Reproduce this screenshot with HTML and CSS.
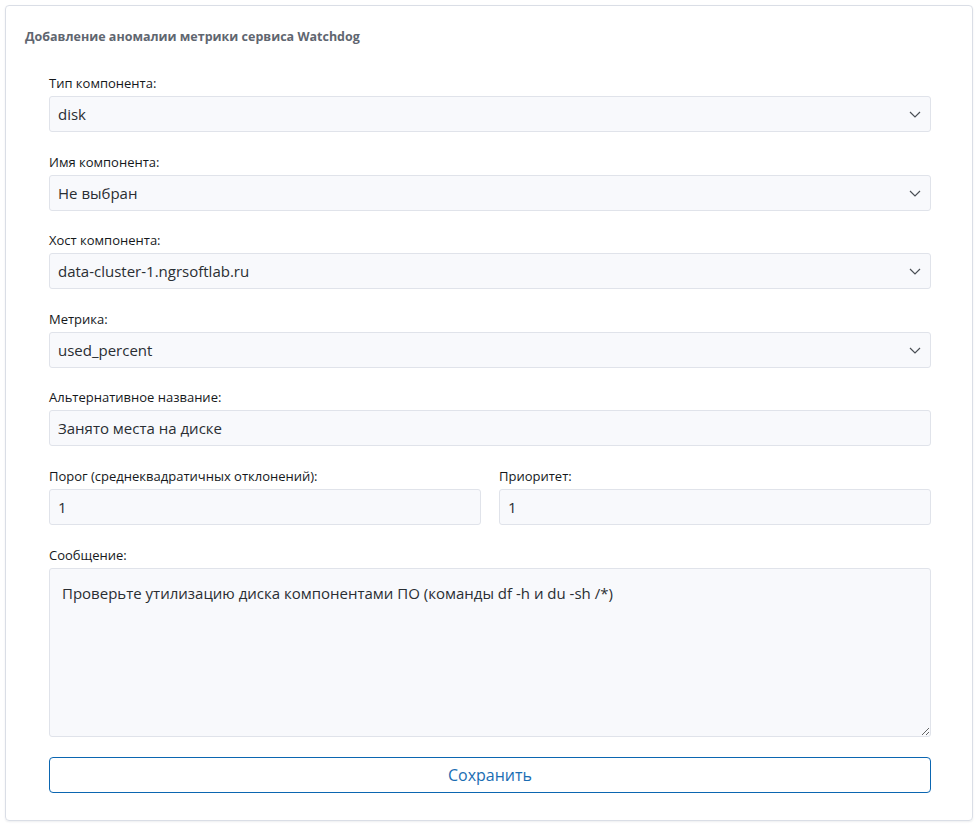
FILE: index.html
```html
<!DOCTYPE html>
<html lang="ru">
<head>
    <meta charset="UTF-8">
    <meta name="viewport" content="width=device-width, initial-scale=1.0">
    <title>Добавление аномалии</title>
    <link rel="stylesheet" href="styles.css">
</head>
<body>
    <div class="card">
        <div class="card-title">Добавление аномалии метрики сервиса Watchdog</div>

        <form class="anomaly-form" onsubmit="return false">
            <div class="field">
                <label for="component-type">Тип компонента:</label>
                <div class="select-wrap">
                    <select id="component-type">
                        <option>disk</option>
                    </select>
                    <svg class="chevron" width="12" height="7" viewBox="0 0 12 7"><path d="M1 1l5 5 5-5" fill="none" stroke="#4a4f55" stroke-width="1.2"/></svg>
                </div>
            </div>

            <div class="field">
                <label for="component-name">Имя компонента:</label>
                <div class="select-wrap">
                    <select id="component-name">
                        <option>Не выбран</option>
                    </select>
                    <svg class="chevron" width="12" height="7" viewBox="0 0 12 7"><path d="M1 1l5 5 5-5" fill="none" stroke="#4a4f55" stroke-width="1.2"/></svg>
                </div>
            </div>

            <div class="field">
                <label for="component-host">Хост компонента:</label>
                <div class="select-wrap">
                    <select id="component-host">
                        <option>data-cluster-1.ngrsoftlab.ru</option>
                    </select>
                    <svg class="chevron" width="12" height="7" viewBox="0 0 12 7"><path d="M1 1l5 5 5-5" fill="none" stroke="#4a4f55" stroke-width="1.2"/></svg>
                </div>
            </div>

            <div class="field">
                <label for="metric">Метрика:</label>
                <div class="select-wrap">
                    <select id="metric">
                        <option>used_percent</option>
                    </select>
                    <svg class="chevron" width="12" height="7" viewBox="0 0 12 7"><path d="M1 1l5 5 5-5" fill="none" stroke="#4a4f55" stroke-width="1.2"/></svg>
                </div>
            </div>

            <div class="field">
                <label for="alt-name">Альтернативное название:</label>
                <input type="text" id="alt-name" value="Занято места на диске">
            </div>

            <div class="field-row">
                <div class="field">
                    <label for="threshold">Порог (среднеквадратичных отклонений):</label>
                    <input type="text" id="threshold" value="1">
                </div>
                <div class="field">
                    <label for="priority">Приоритет:</label>
                    <input type="text" id="priority" value="1">
                </div>
            </div>

            <div class="field">
                <label for="message">Сообщение:</label>
                <textarea id="message">Проверьте утилизацию диска компонентами ПО (команды df -h и du -sh /*)</textarea>
            </div>

            <button type="submit" class="save-btn">Сохранить</button>
        </form>
    </div>
</body>
</html>
```

FILE: styles.css
```css
body {
    margin: 0;
    padding: 5px 6px 3px 5px;
    background: #ffffff;
    font-family: "Open Sans", "Noto Sans", sans-serif;
    color: #212529;
}

.card {
    border: 1px solid #dadee6;
    border-radius: 4px;
    box-shadow: 0 1px 2px rgba(30, 40, 60, 0.08);
    padding: 22px 41px 27px 43px;
    height: 816px;
    box-sizing: border-box;
}

.card-title {
    margin-left: -24px;
    font-size: 12.5px;
    font-weight: 700;
    color: #5f6670;
    line-height: 18px;
    margin-bottom: 28px;
}

.field {
    display: flex;
    flex-direction: column;
    margin-bottom: 20.6px;
}

.field label {
    font-size: 13px;
    line-height: 18px;
    margin-bottom: 4px;
    color: #15181b;
}

.field-row {
    display: grid;
    grid-template-columns: 1fr 1fr;
    gap: 18px;
}

select,
input,
textarea {
    font-family: inherit;
    font-size: 15px;
    color: #2a2e33;
    background: #f8f9fc;
    border: 1px solid #e0e3ea;
    border-radius: 3px;
    box-sizing: border-box;
    outline: none;
}

select,
input {
    height: 36px;
    padding: 0 8px;
    width: 100%;
}

select {
    appearance: none;
    -webkit-appearance: none;
}

.select-wrap {
    position: relative;
}

.chevron {
    position: absolute;
    right: 10px;
    top: 15px;
    pointer-events: none;
}

textarea {
    height: 169px;
    padding: 13px 12px;
    resize: vertical;
    line-height: 22px;
}

.save-btn {
    display: block;
    width: 100%;
    height: 36px;
    margin-top: 0;
    background: #fff;
    border: 1px solid #0b66b1;
    border-radius: 4px;
    color: #1a6db3;
    font-family: inherit;
    font-size: 16px;
    cursor: pointer;
}
```
